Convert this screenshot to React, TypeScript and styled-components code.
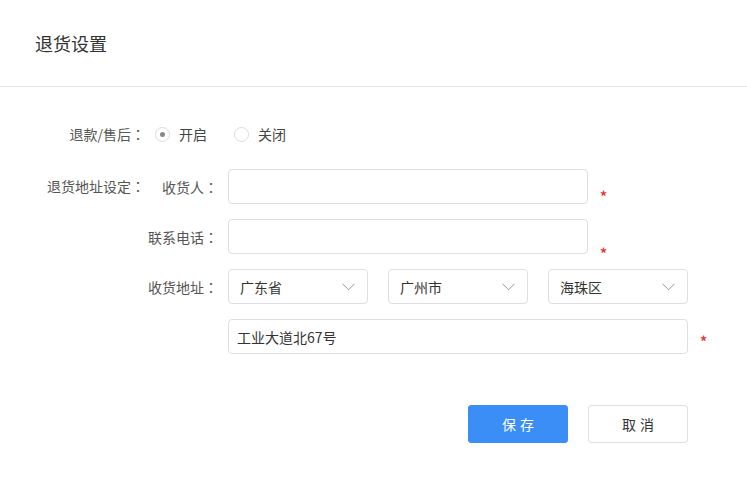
import React from 'react';
import styled, {createGlobalStyle} from 'styled-components';

const GlobalStyle = createGlobalStyle`
  html, body {
    margin: 0;
    padding: 0;
    background: #fff;
  }
  body {
    font-family: "Noto Sans CJK SC", "Noto Sans", "Liberation Sans", sans-serif;
    color: #333;
  }
`;

const Page = styled.div`
  width: 747px;
  height: 481px;
  background: #fff;
`;

const Header = styled.div`
  height: 86px;
  padding-left: 35px;
  display: flex;
  align-items: center;
  border-bottom: 1px solid #e8e8e8;
  font-size: 18px;
  color: #333;
`;

const Form = styled.div`
  padding-top: 37px;
  display: flex;
  flex-direction: column;
`;

const Row = styled.div<{$gap?: number}>`
  display: flex;
  align-items: ${(props) => (props.$gap ? 'center' : 'flex-start')};
  margin-bottom: ${(props) => props.$gap ?? 0}px;
`;

const MainLabel = styled.div<{$top?: number}>`
  width: 145px;
  text-align: right;
  font-size: 14px;
  color: #555;
  line-height: 20px;
  padding-top: ${(props) => props.$top ?? 0}px;
  flex-shrink: 0;
`;

// centred full-width colon, as in the reference font
const Colon = styled.span`
  font-family: "Noto Sans CJK TC", "Noto Sans CJK SC", sans-serif;
`;

const RadioGroup = styled.div`
  display: flex;
  align-items: center;
  margin-left: 10px;
  gap: 27px;
`;

const RadioItem = styled.label`
  display: flex;
  align-items: center;
  gap: 9px;
  font-size: 14px;
  color: #444;
  line-height: 20px;
`;

const RadioCircle = styled.span<{$checked?: boolean}>`
  width: 13px;
  height: 13px;
  border-radius: 50%;
  border: 1px solid #dcdcdc;
  display: flex;
  align-items: center;
  justify-content: center;
  &::after {
    content: '';
    width: 5px;
    height: 5px;
    border-radius: 50%;
    background: ${(props) => (props.$checked ? '#888' : 'transparent')};
  }
`;

const Fields = styled.div`
  display: flex;
  flex-direction: column;
  gap: 15px;
`;

const FieldRow = styled.div`
  display: flex;
  align-items: center;
`;

const SubLabel = styled.div`
  width: 73px;
  text-align: right;
  font-size: 14px;
  color: #555;
  margin-right: 10px;
  flex-shrink: 0;
`;

const Spacer = styled.div`
  width: 83px;
  flex-shrink: 0;
`;

const TextInput = styled.input<{$width: number}>`
  box-sizing: border-box;
  width: ${(props) => props.$width}px;
  height: 35px;
  border: 1px solid #dcdfe6;
  border-radius: 4px;
  padding: 0 8px;
  font-family: inherit;
  font-size: 14px;
  color: #333;
  outline: none;
`;

const Required = styled.span<{$shift: number}>`
  color: #e53935;
  font-size: 14px;
  font-weight: bold;
  margin-left: 12px;
  transform: translateY(${(props) => props.$shift}px);
`;

const SelectGroup = styled.div`
  display: flex;
  gap: 20px;
`;

const SelectBox = styled.div`
  box-sizing: border-box;
  width: 140px;
  height: 35px;
  border: 1px solid #dcdfe6;
  border-radius: 4px;
  padding: 0 12px 0 11px;
  display: flex;
  align-items: center;
  justify-content: space-between;
  font-size: 14px;
  color: #333;
`;

const Actions = styled.div`
  display: flex;
  gap: 20px;
  margin-top: 51px;
  padding-left: 468px;
`;

const Button = styled.button<{$primary?: boolean}>`
  width: 100px;
  height: 38px;
  border-radius: 3px;
  font-family: inherit;
  font-size: 14px;
  letter-spacing: 4px;
  text-indent: 4px;
  cursor: pointer;
  border: 1px solid ${(props) => (props.$primary ? '#3a8ef6' : '#e0e0e0')};
  background: ${(props) => (props.$primary ? '#3a8ef6' : '#fff')};
  color: ${(props) => (props.$primary ? '#fff' : '#333')};
`;

const Chevron = () => (
  <svg width="13" height="8" viewBox="0 0 13 8" fill="none">
    <path d="M0.5 0.8L6.5 6.8L12.5 0.8" stroke="#999" strokeWidth="1" />
  </svg>
);

const Select = ({value}: {value: string}) => (
  <SelectBox>
    <span>{value}</span>
    <Chevron />
  </SelectBox>
);

const Label = ({text}: {text: string}) => (
  <>
    {text}
    <Colon>：</Colon>
  </>
);

export default function App() {
  return (
    <Page>
      <GlobalStyle />
      <Header>退货设置</Header>
      <Form>
        <Row $gap={25}>
          <MainLabel>
            <Label text="退款/售后" />
          </MainLabel>
          <RadioGroup>
            <RadioItem>
              <RadioCircle $checked />
              开启
            </RadioItem>
            <RadioItem>
              <RadioCircle />
              关闭
            </RadioItem>
          </RadioGroup>
        </Row>
        <Row>
          <MainLabel $top={7}>
            <Label text="退货地址设定" />
          </MainLabel>
          <Fields>
            <FieldRow>
              <SubLabel>
                <Label text="收货人" />
              </SubLabel>
              <TextInput $width={360} />
              <Required $shift={9}>*</Required>
            </FieldRow>
            <FieldRow>
              <SubLabel>
                <Label text="联系电话" />
              </SubLabel>
              <TextInput $width={360} />
              <Required $shift={16}>*</Required>
            </FieldRow>
            <FieldRow>
              <SubLabel>
                <Label text="收货地址" />
              </SubLabel>
              <SelectGroup>
                <Select value="广东省" />
                <Select value="广州市" />
                <Select value="海珠区" />
              </SelectGroup>
            </FieldRow>
            <FieldRow>
              <Spacer />
              <TextInput $width={460} defaultValue="工业大道北67号" />
              <Required $shift={4}>*</Required>
            </FieldRow>
          </Fields>
        </Row>
        <Actions>
          <Button $primary>保存</Button>
          <Button>取消</Button>
        </Actions>
      </Form>
    </Page>
  );
}
